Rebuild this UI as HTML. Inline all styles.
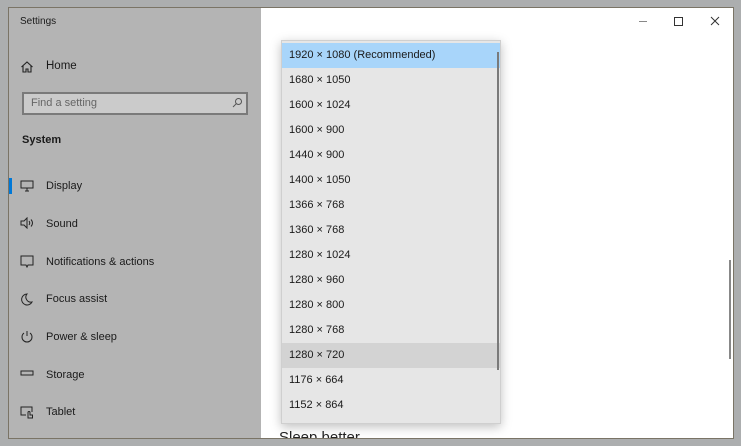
<!DOCTYPE html>
<html><head><style>
*{margin:0;padding:0;box-sizing:border-box}
body{width:741px;height:446px;background:#acaeaf;font-family:"Liberation Sans",sans-serif;position:relative;overflow:hidden;color:#1a1a1a}
.win{position:absolute;left:8px;top:7px;width:726px;height:432px;background:#fff;border:1px solid #7a7466;overflow:hidden}
.side{position:absolute;left:0;top:0;width:252px;height:100%;background:#b4b4b4}
.t{position:absolute;font-size:11px}
.ic{position:absolute;left:11px}
.dd{position:absolute;left:272px;top:32px;width:220px;height:384px;background:#e6e6e6;border:1px solid #cfcfcf;box-shadow:0 3px 10px rgba(0,0,0,.25)}
.it{height:25px;line-height:25px;padding-left:7px;font-size:11px;color:#1a1a1a}
</style></head><body>
<div class="win">
 <div class="side">
  <div class="t" style="left:11px;top:8px;font-size:10px">Settings</div>
  <svg class="ic" style="top:52px" width="14" height="14" viewBox="0 0 14 14" fill="none" stroke="#222" stroke-width="1.1"><path d="M1.5 7L7 2l5.5 5M3 6v6h3V9h2v3h3V6"/></svg>
  <div class="t" style="left:37px;top:52px;font-size:11.5px">Home</div>
  <div style="position:absolute;left:13px;top:84px;width:226px;height:23px;border:2px solid #7a7a7a;background:#cbcbcb"></div>
  <div class="t" style="left:22px;top:89px;color:#666">Find a setting</div>
  <svg style="position:absolute;left:223px;top:89px" width="11" height="11" viewBox="0 0 11 11" fill="none" stroke="#555"><circle cx="6.5" cy="4.5" r="3"/><path d="M4.3 6.7L1 10"/></svg>
  <div class="t" style="left:13px;top:126px;font-weight:bold">System</div>
  <div style="position:absolute;left:0;top:170px;width:3px;height:16px;background:#0078d7"></div>
  <svg class="ic" style="top:172px" width="14" height="12" viewBox="0 0 14 12" fill="none" stroke="#222"><rect x="1" y="1" width="12" height="7"/><path d="M5 11h4M7 8v3"/></svg>
  <div class="t" style="left:37px;top:172px">Display</div>
  <svg class="ic" style="top:209px" width="14" height="12" viewBox="0 0 14 12" fill="none" stroke="#222"><path d="M1 4h3l3-3v10L4 8H1z M9 4q1.5 2 0 4M11 2.5q3 3.5 0 7"/></svg>
  <div class="t" style="left:37px;top:210px">Sound</div>
  <svg class="ic" style="top:247px" width="14" height="13" viewBox="0 0 14 13" fill="none" stroke="#222"><path d="M1 1h12v9H8l-1 2-1-2H1z"/></svg>
  <div class="t" style="left:37px;top:248px">Notifications &amp; actions</div>
  <svg class="ic" style="top:285px" width="14" height="13" viewBox="0 0 14 13" fill="none" stroke="#222"><path d="M7 1a5.5 5.5 0 1 0 5 8A5 5 0 0 1 7 1z"/></svg>
  <div class="t" style="left:37px;top:285px">Focus assist</div>
  <svg class="ic" style="top:322px" width="14" height="13" viewBox="0 0 14 13" fill="none" stroke="#222"><path d="M4 3a5 5 0 1 0 6 0M7 1v5"/></svg>
  <div class="t" style="left:37px;top:323px">Power &amp; sleep</div>
  <svg class="ic" style="top:362px" width="14" height="6" viewBox="0 0 14 6" fill="none" stroke="#222"><rect x="1" y="1" width="12" height="4"/></svg>
  <div class="t" style="left:37px;top:361px">Storage</div>
  <svg class="ic" style="top:398px" width="14" height="13" viewBox="0 0 14 13" fill="none" stroke="#222"><path d="M6 9H1V1h11v5M8 12V6.5a1 1 0 0 1 2 0V9h2.5v3z"/></svg>
  <div class="t" style="left:37px;top:398px">Tablet</div>
 </div>
 <div style="position:absolute;left:630px;top:13px;width:8px;height:1px;background:#888"></div>
 <div style="position:absolute;left:665px;top:9px;width:9px;height:9px;border:1px solid #333"></div>
 <svg style="position:absolute;left:701px;top:8px" width="10" height="10" viewBox="0 0 10 10" stroke="#333"><path d="M1 1l8 8M9 1l-8 8"/></svg>
 <div style="position:absolute;left:720px;top:252px;width:2px;height:99px;background:#888"></div>
 <div class="t" style="left:270px;top:421px;font-size:15px;color:#222">Sleep better</div>
 <div class="dd">
  <div style="height:2px"></div>
  <div class="it" style="background:#a8d5fa">1920 × 1080 (Recommended)</div>
  <div class="it">1680 × 1050</div>
  <div class="it">1600 × 1024</div>
  <div class="it">1600 × 900</div>
  <div class="it">1440 × 900</div>
  <div class="it">1400 × 1050</div>
  <div class="it">1366 × 768</div>
  <div class="it">1360 × 768</div>
  <div class="it">1280 × 1024</div>
  <div class="it">1280 × 960</div>
  <div class="it">1280 × 800</div>
  <div class="it">1280 × 768</div>
  <div class="it" style="background:#d3d3d3">1280 × 720</div>
  <div class="it">1176 × 664</div>
  <div class="it">1152 × 864</div>
  <div style="position:absolute;left:215px;top:11px;width:2px;height:318px;background:#7a7a7a"></div>
 </div>
</div>
</body></html>
